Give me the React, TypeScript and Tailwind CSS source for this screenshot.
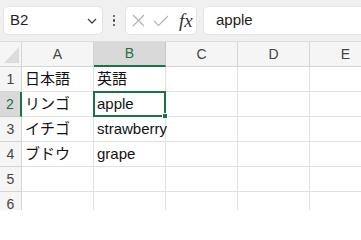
import React from "react";

const GREEN = "#1e7145";
const cols = ["A", "B", "C", "D", "E"];
const data: string[][] = [
  ["日本語", "英語"],
  ["リンゴ", "apple"],
  ["イチゴ", "strawberry"],
  ["ブドウ", "grape"],
  ["", ""],
  ["", ""],
];

export default function App() {
  const font = { fontFamily: '"Liberation Sans", "Noto Sans CJK JP", sans-serif' };
  return (
    <div className="w-[361px] h-[210px] overflow-hidden bg-white relative" style={font}>
      {/* toolbar */}
      <div className="h-[42px] bg-[#f0f0f0] flex items-center pl-[3px] border-b border-[#dcdcdc] overflow-hidden">
        <div className="w-[100px] h-[29px] shrink-0 bg-white rounded-[5px] border border-[#e3e3e3] flex items-center justify-between pl-[6px] pr-[5px]">
          <span className="text-[15px] text-[#222]">B2</span>
          <svg width="10" height="6" viewBox="0 0 10 6">
            <polyline points="1,1 5,5 9,1" fill="none" stroke="#444" strokeWidth="1.3" />
          </svg>
        </div>
        <div className="w-[22px] shrink-0 flex flex-col items-center justify-center gap-[2px]">
          <div className="w-[2.5px] h-[2.5px] bg-[#444] rounded-full" />
          <div className="w-[2.5px] h-[2.5px] bg-[#444] rounded-full" />
          <div className="w-[2.5px] h-[2.5px] bg-[#444] rounded-full" />
        </div>
        <div className="w-[72px] h-[29px] shrink-0 bg-white rounded-[5px] border border-[#e3e3e3] flex items-center pl-[5px]">
          <svg width="13" height="13" viewBox="0 0 13 13" className="ml-[1px]">
            <line x1="1" y1="1" x2="12" y2="12" stroke="#b4b4b4" strokeWidth="1.2" />
            <line x1="12" y1="1" x2="1" y2="12" stroke="#b4b4b4" strokeWidth="1.2" />
          </svg>
          <svg width="16" height="12" viewBox="0 0 16 12" className="ml-[8px]">
            <polyline points="1,6 5.5,10.5 15,1" fill="none" stroke="#b4b4b4" strokeWidth="1.2" />
          </svg>
          <span
            className="ml-[10px] text-[19px] italic text-[#333] leading-none"
            style={{ fontFamily: '"Liberation Serif", serif' }}
          >
            fx
          </span>
        </div>
        <div className="ml-[6px] w-[180px] h-[29px] shrink-0 bg-white rounded-l-[5px] border border-[#e3e3e3] flex items-center pl-[12px]">
          <span className="text-[15px] text-[#222]">apple</span>
        </div>
      </div>

      {/* grid */}
      <div className="grid grid-cols-[22px_72px_72px_72px_72px_72px] auto-rows-[25px]">
        {/* header row */}
        <div className="bg-[#f5f5f5] border-r border-b border-[#d4d4d4] relative">
          <svg width="22" height="25" viewBox="0 0 22 25" className="absolute inset-0">
            <polygon points="19,5 19,21 4,21" fill="#dcdcdc" />
          </svg>
        </div>
        {cols.map((c) =>
          c === "B" ? (
            <div
              key={c}
              className="bg-[#d9d9d9] border-r border-[#c8c8c8] border-b-2 border-b-[#1e7145] flex items-center justify-center text-[14px] text-[#1e7145]"
            >
              {c}
            </div>
          ) : (
            <div
              key={c}
              className="bg-[#f5f5f5] border-r border-b border-[#d4d4d4] flex items-center justify-center text-[14px] text-[#444]"
            >
              {c}
            </div>
          )
        )}
        {data.map((row, ri) => (
          <React.Fragment key={ri}>
            {ri === 1 ? (
              <div className="bg-[#d9d9d9] border-r-2 border-r-[#1e7145] border-b border-[#c8c8c8] flex items-center justify-center text-[14px] text-[#1e7145]">
                {ri + 1}
              </div>
            ) : (
              <div className="bg-[#f5f5f5] border-r border-b border-[#d4d4d4] flex items-center justify-center text-[14px] text-[#444]">
                {ri + 1}
              </div>
            )}
            {cols.map((c, ci) => {
              const v = row[ci] ?? "";
              const selected = ri === 1 && ci === 1;
              return (
                <div
                  key={c}
                  className="border-r border-b border-[#e1e1e1] relative flex items-center pl-[3px] text-[15px] text-[#111] whitespace-nowrap overflow-visible"
                >
                  <span className="relative z-10">{v}</span>
                  {selected && (
                    <>
                      <div
                        className="absolute left-[-1px] top-[-1px] right-[-1px] bottom-[-1px] border-2 z-20 pointer-events-none"
                        style={{ borderColor: GREEN }}
                      />
                      <div
                        className="absolute right-[-3px] bottom-[-3px] w-[6px] h-[6px] z-30 border border-white"
                        style={{ backgroundColor: GREEN }}
                      />
                    </>
                  )}
                </div>
              );
            })}
          </React.Fragment>
        ))}
      </div>
    </div>
  );
}
